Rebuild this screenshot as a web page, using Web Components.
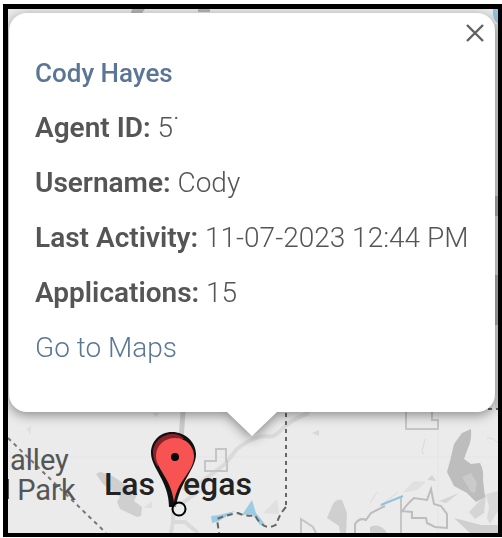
<!DOCTYPE html>
<html lang="en">
<head>
<meta charset="utf-8">
<title>Agent location</title>
<style>
html,body{margin:0;height:100%;background:#fff}
body{font-family:Roboto,"Liberation Sans",sans-serif;color:#555}
</style>
</head>
<body>
<map-view>
  <info-card>
    <a slot="title" href="#agent">Cody Hayes</a>
    <info-row label="Agent ID:">5˙</info-row>
    <info-row label="Username:">Cody</info-row>
    <info-row label="Last Activity:">11-07-2023 12:44 PM</info-row>
    <info-row label="Applications:">15</info-row>
    <a slot="action" href="#maps">Go to Maps</a>
  </info-card>
</map-view>

<template id="map-view">
<style>
:host{display:flex;box-sizing:border-box;min-height:100vh;padding:4px 0 1px 3px}
.frame{flex:1;position:relative;overflow:hidden;border:solid #000;border-width:5px 4px 4px 5px;background:#ebebeb;padding:4px 3px 0 1px}
map-canvas{position:absolute;inset:0}
.over{position:relative}
</style>
<div class="frame"><map-canvas></map-canvas><div class="over"><slot></slot></div></div>
</template>

<template id="map-canvas">
<style>
:host{display:block}
svg{display:block;width:100%;height:100%}
text{font-family:Roboto,"Liberation Sans",sans-serif}
.area{margin:0;font:29px/30px Roboto,"Liberation Sans",sans-serif;color:#555}
</style>
<svg viewBox="8 9 490 524" preserveAspectRatio="xMidYMin slice" role="img" aria-label="Map of Las Vegas">
  <path d="M8 9h490v524H8z" fill="#ebebeb"/>
  <path d="M132 9h13l-3 4h-11zM198 9h12v3h-12z" fill="#b5b5b5"/>
  <path d="M493 9h5v15q-6-5-5-15z" fill="#8dc5de"/>
  <path d="M495 24h3v385h-3z" fill="#d5d5d5"/>
  <path d="M495 196h3v20h-3zM495 275h3v50h-3z" fill="#aaa"/>
  <path d="M8 457H498M438 412V533" stroke="#e5e5e5" fill="none"/>
  <g fill="#cfcfcf">
    <path d="M96 474l4-2 11 3 15 10 11 9-3 7 8 6-1 9-4 1-17-8-3-7 3-5-17-13z"/>
    <path d="M327 518l6-14q4-6 9-4l5 13-1 20h-6l-1-7z"/>
    <path d="M370 527q10-5 17 6h-17zM454 518l27 7 17 0v8h-28z"/>
    <path d="M427 480l5-5 4 6zM439 501l20-8-13 10zM469 512l17-18-2 19-9 6z" fill="#d5d5d5"/>
    <path d="M486 494l12-3v20l-8 13-3-6 2-11z" fill="#dadada"/>
    <path d="M402 493l12-12 12 1-9 8zM26 429l5-3v9zM143 508l9-7v7zM263 513l14-14 2 15z" fill="#e0e0e0"/>
    <path d="M153 413h6l-3 4zM312 433l7-3v6z" fill="#d8d8d8"/>
  </g>
  <path d="M471 429q1 11-3 19l-4 11 7 5 9-1q4 7 3 17l2 17-9 5-9-9-13-7-7-14 3-11 4-17 8-11z" fill="#bdbdbd"/>
  <path d="M462 477l9-4 6 10-2 10-4-1z" fill="#cacaca"/>
  <g fill="none">
    <path d="M183 412l-2 28" stroke="#c9c9c9" stroke-width="5"/>
    <path d="M200 483l25-19 12-15q15-12 28-13 8 2 13-3 13-14 31-20" stroke="#dadada" stroke-width="4"/>
    <path d="M173 502v20l12 0 13 11m-25-11l-2 11M180 505l20-15M183 490l12-10" stroke="#dadada" stroke-width="4"/>
    <path d="M216 449h10v12h1v10h-22v-10h11zM406 412v17h32v-9h-6v-8M301 533v-14l12 8 3 6M401 497v36" stroke="#c5c5c5" stroke-width="2"/>
    <path d="M402 512q3-6 12-14l13 2 4-11 3 15 7 2 6 8v14l-12-1-8-4-1-5h-14v-6l-10-1zM355 533v-9q5-7 11-4l5-7 14-7" stroke="#bdbdbd" stroke-width="2"/>
    <path d="M425 439l-3 13 2 3M487 438q6-1 11 5M370 503l7-11M380 506l18-14" stroke="#dadada" stroke-width="1"/>
    <path d="M381 505l22-9" stroke="#8fc5dc" stroke-width="2"/>
  </g>
  <path d="M211 516l8-1 16-4-16 10-7 2zM242 515l10-15 4 13 9 11-5 1-8-11z" fill="#9bcce2"/>
  <g fill="none" stroke="#666" stroke-width="2" stroke-dasharray="4 4">
    <path d="M286 413V507"/>
    <path d="M286 507q-8 9-9 17-13 9-22-9-9 2-17-2-12 2-21 6l2 14" stroke-dasharray="6 4"/>
    <path d="M8 438l98 95" stroke="#777"/>
    <path d="M480 409h18"/>
  </g>
  <foreignObject x="10" y="445" width="90" height="62">
    <p class="area">alley<br>&nbsp;Park</p>
  </foreignObject>
  <path d="M8 479h1v20h-1z" fill="#555"/>
  <text x="104" y="495" font-size="32" font-weight="500" fill="#222">Las Vegas</text>
  <path d="M172 432c-13 0-21 10-21 21 0 15 18 28 18 54h7c4-26 20-38 20-53 0-12-11-22-24-22z" fill="#111"/>
  <path d="M173 434c-11 0-20 8-20 19 0 5 2 10 5 14 0-18 7-27 26-28q-4-5-11-5z" fill="#872329"/>
  <path d="M175 438c-11 0-19 8-19 18 0 13 15 22 18 46 4-23 20-30 20-46 0-10-8-18-19-18z" fill="#f75353"/>
  <circle cx="175" cy="457" r="4" fill="#080808"/>
  <circle cx="179" cy="509" r="6.500" fill="#f1f1f1" fill-opacity=".5" stroke="#000" stroke-width="2"/>
</svg>
</template>

<template id="info-card">
<style>
:host{display:block;position:relative;filter:drop-shadow(0 3px 6px rgba(0,0,0,.42))}
.card{position:relative;background:#fff;border-radius:18px;padding:33px 24px 37px 26px;font-size:28px;line-height:55px;font-weight:300}
.tail{display:block;width:50px;height:24px;margin-left:calc(50% - 25px);background:#fff;clip-path:polygon(0 0,100% 0,50% 100%)}
::slotted(a){display:table;color:#5b7795;text-decoration:none}
::slotted([slot=title]){font-size:26px;line-height:54px;font-weight:500;color:#5b7594}
button{position:absolute;top:8px;right:8px;width:24px;height:24px;padding:0;border:0;background:none;cursor:pointer}
svg{display:block;margin:auto}
</style>
<section class="card">
  <button type="button" aria-label="Close"><svg width="18" height="18" viewBox="0 0 18 18"><path d="M1 1l16 16M17 1L1 17" stroke="#606060" stroke-width="2.400" fill="none"/></svg></button>
  <slot name="title"></slot><slot></slot><slot name="action"></slot>
</section>
<span class="tail"></span>
</template>

<template id="info-row">
<style>
:host{display:block;color:#555}
b{font-weight:600}
</style>
<b></b> <slot></slot>
</template>

<script>
class TemplateElement extends HTMLElement{
  constructor(){
    super();
    this.attachShadow({mode:"open"}).append(document.getElementById(this.localName).content.cloneNode(true));
  }
}
customElements.define("map-canvas",class extends TemplateElement{});
customElements.define("map-view",class extends TemplateElement{});
customElements.define("info-card",class extends TemplateElement{});
customElements.define("info-row",class extends TemplateElement{
  connectedCallback(){this.shadowRoot.querySelector("b").textContent=this.getAttribute("label")}
});
</script>
</body>
</html>
